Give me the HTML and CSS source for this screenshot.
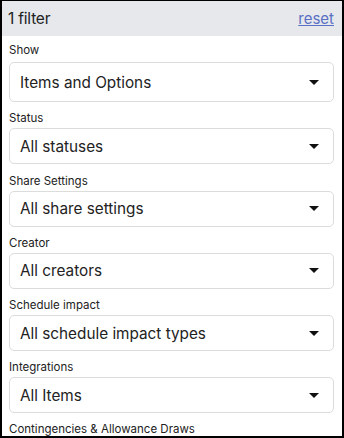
FILE: index.html
```html
<!DOCTYPE html>
<html>
<head>
    <link rel="stylesheet" href="styles.css">
</head>
<body>
    <div class="panel">
        <div class="panel-header">
            <span class="filter-count">1 filter</span>
            <a class="reset-link" href="#">reset</a>
        </div>

        <div class="filters">
            <div class="filter-group">
                <div class="filter-label">Show</div>
                <div class="select select-large">
                    <span class="select-value">Items and Options</span>
                    <span class="caret"></span>
                </div>
            </div>

            <div class="filter-group">
                <div class="filter-label">Status</div>
                <div class="select">
                    <span class="select-value">All statuses</span>
                    <span class="caret"></span>
                </div>
            </div>

            <div class="filter-group">
                <div class="filter-label">Share Settings</div>
                <div class="select">
                    <span class="select-value">All share settings</span>
                    <span class="caret"></span>
                </div>
            </div>

            <div class="filter-group">
                <div class="filter-label">Creator</div>
                <div class="select">
                    <span class="select-value">All creators</span>
                    <span class="caret"></span>
                </div>
            </div>

            <div class="filter-group">
                <div class="filter-label">Schedule impact</div>
                <div class="select">
                    <span class="select-value">All schedule impact types</span>
                    <span class="caret"></span>
                </div>
            </div>

            <div class="filter-group">
                <div class="filter-label">Integrations</div>
                <div class="select">
                    <span class="select-value">All Items</span>
                    <span class="caret"></span>
                </div>
            </div>

            <div class="filter-group">
                <div class="filter-label">Contingencies &amp; Allowance Draws</div>
                <div class="select">
                    <span class="select-value">All draws</span>
                    <span class="caret"></span>
                </div>
            </div>
        </div>
    </div>
</body>
</html>
```

FILE: styles.css
```css
body {
    margin: 0;
    font-family: Inter, 'Noto Sans', sans-serif;
    color: #222;
}

.panel {
    width: 344px;
    height: 438px;
    box-sizing: border-box;
    border: 2px solid #000;
    border-top-width: 1px;
    overflow: hidden;
    background-color: #fff;
}

.panel-header {
    height: 35px;
    display: flex;
    align-items: center;
    justify-content: space-between;
    padding: 0 8px 0 6px;
    background-color: #e6e8ec;
}

.filter-count {
    font-size: 15.5px;
    letter-spacing: -0.2px;
}

.reset-link {
    font-size: 15px;
    color: #5a70c4;
    text-decoration: underline;
}

.filters {
    padding: 6px 8px 0 7px;
}

.filter-group {
    margin-bottom: 8.2px;
}

.filter-label {
    font-size: 11.5px;
    line-height: 16px;
    margin-bottom: 2px;
}

.select {
    height: 36px;
    box-sizing: border-box;
    display: flex;
    align-items: center;
    justify-content: space-between;
    padding: 0 14px 0 10px;
    border: 1px solid #dcdcdc;
    border-radius: 5px;
}

.select-large {
    height: 40.3px;
    margin-top: 4px;
}

.select-value {
    font-size: 15.3px;
}

.caret {
    width: 0;
    height: 0;
    border-left: 5px solid transparent;
    border-right: 5px solid transparent;
    border-top: 5px solid #111;
}
```
